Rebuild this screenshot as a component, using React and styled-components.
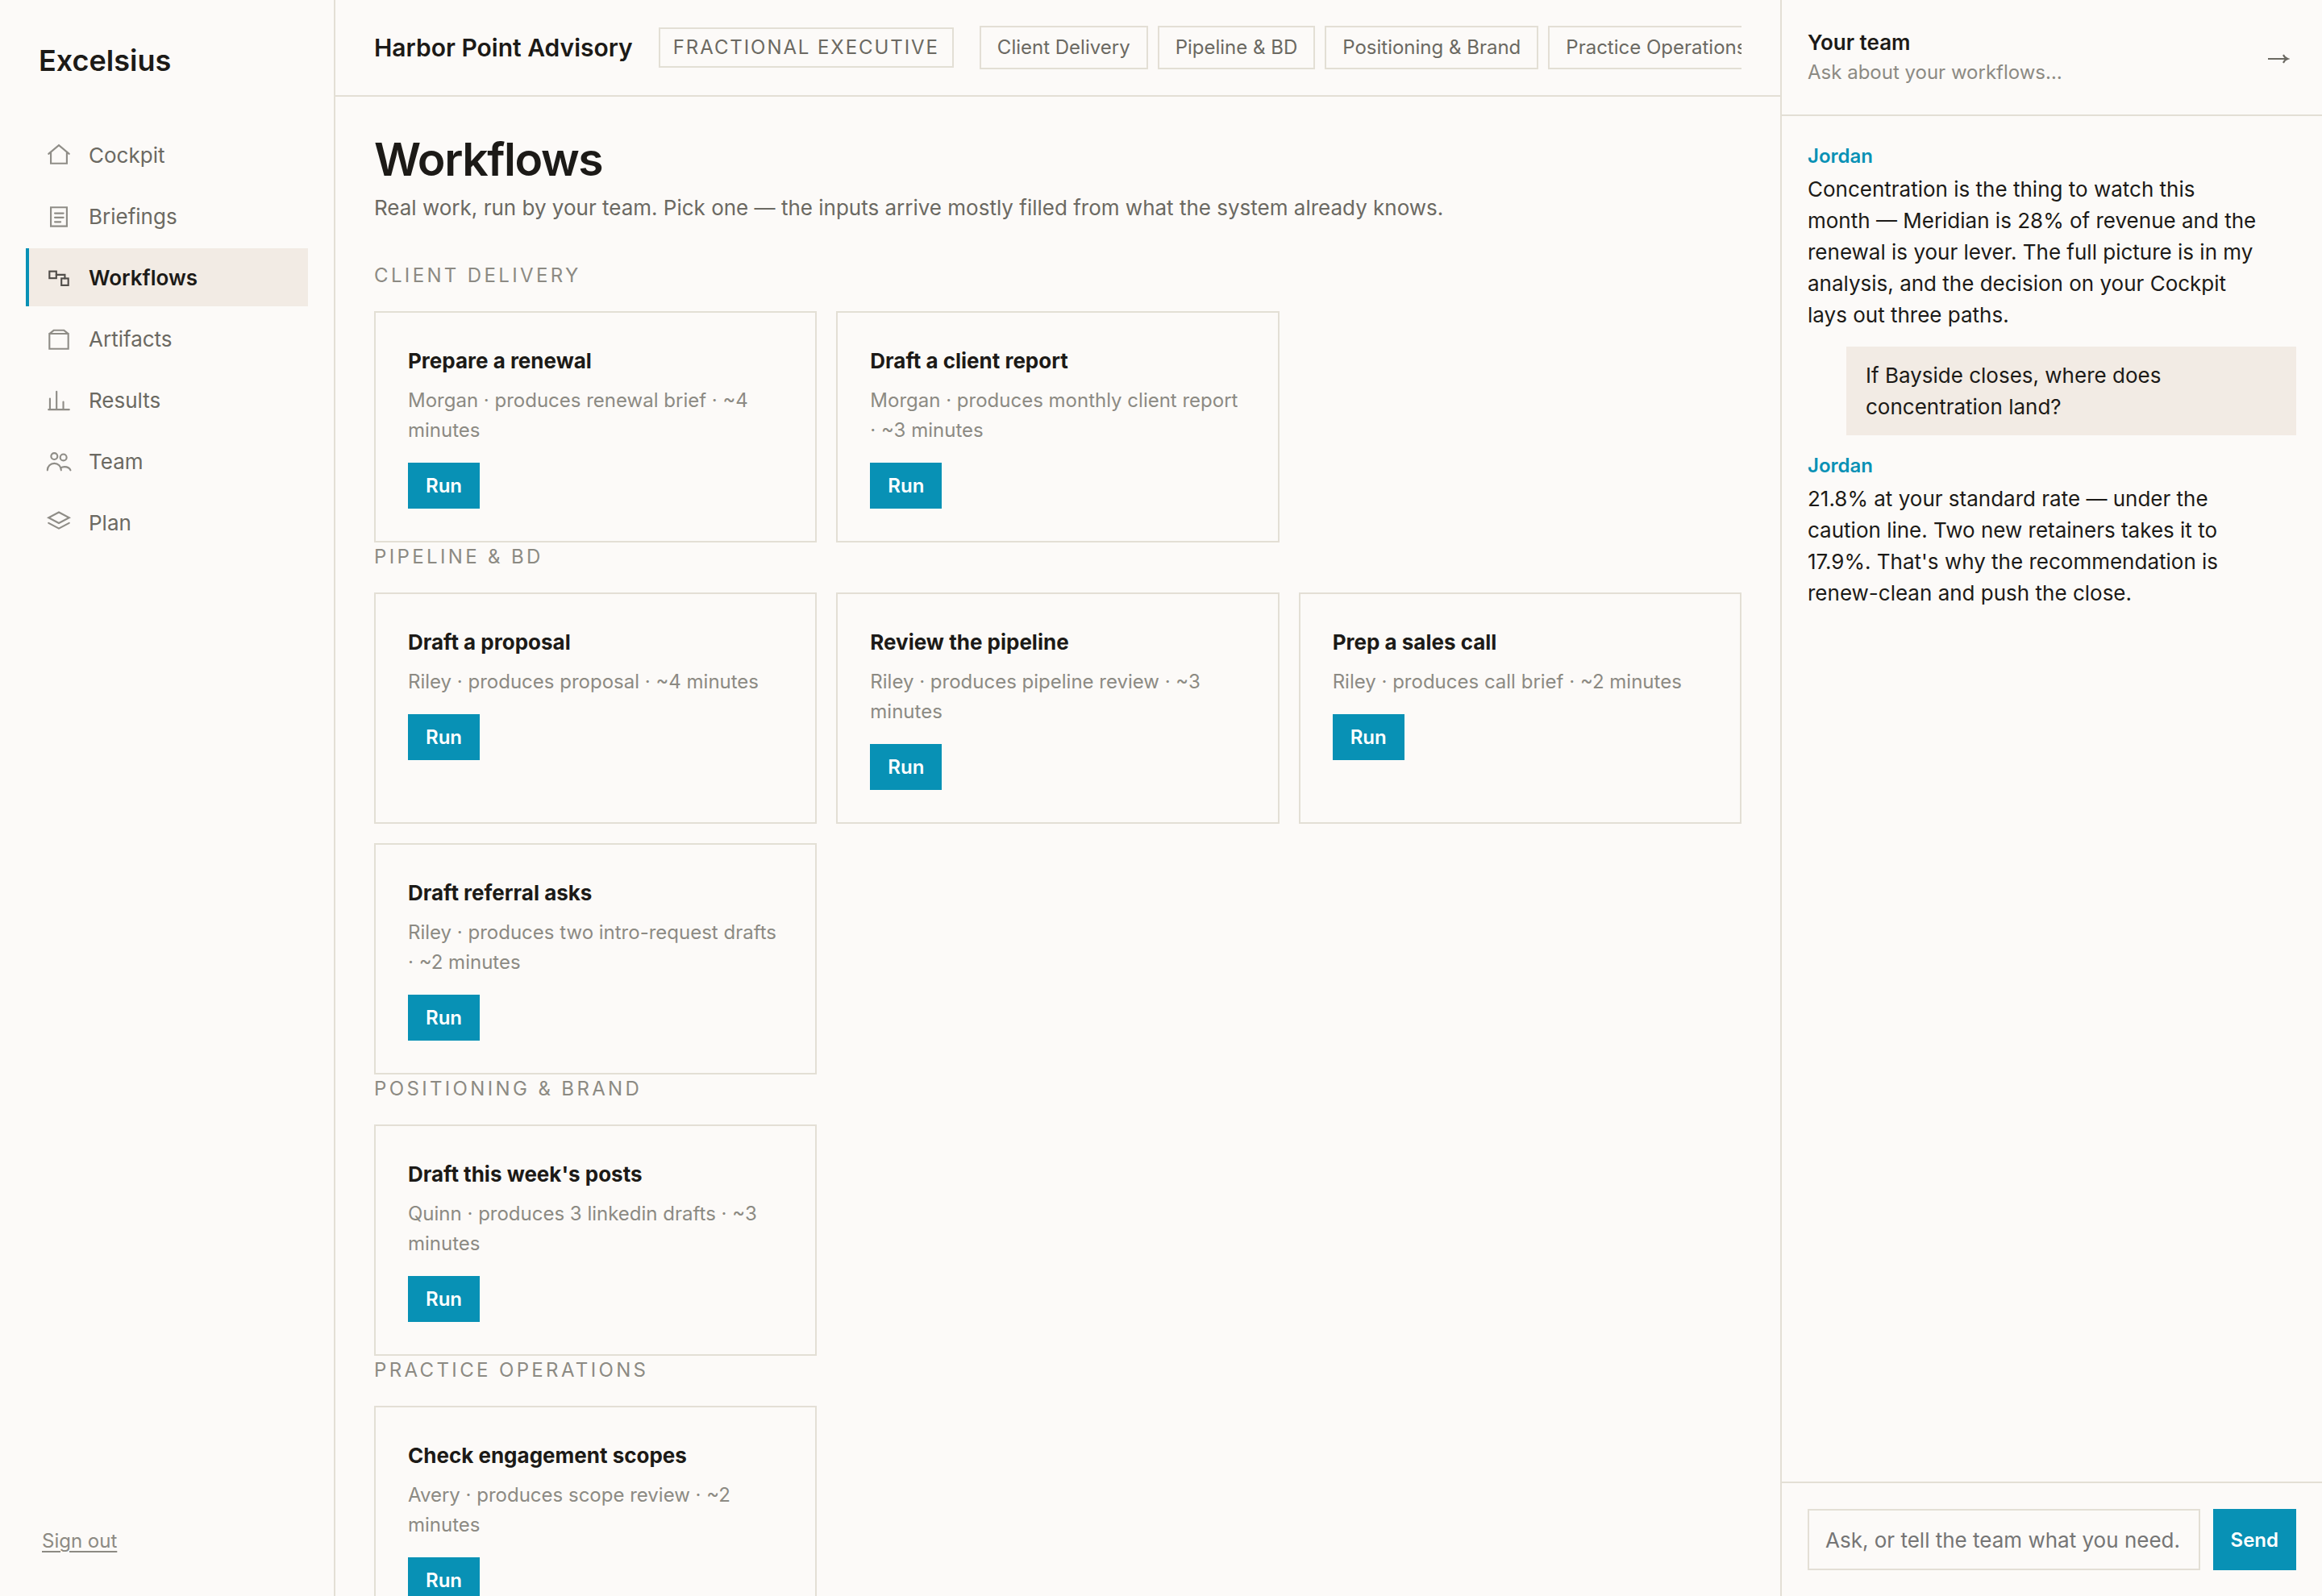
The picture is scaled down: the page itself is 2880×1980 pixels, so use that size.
import { useState } from "react";
import styled, { createGlobalStyle } from "styled-components";

const ink = "#1c1a17";
const body = "#6b6962";
const muted = "#8c8a83";
const line = "#e3dfd5";
const paper = "#fcfaf8";
const sand = "#f2ebe4";
const teal = "#0891b5";

const GlobalStyle = createGlobalStyle`
  * {
    box-sizing: border-box;
  }

  body {
    margin: 0;
    background: ${paper};
    color: ${ink};
    font-family: Inter, "Liberation Sans", sans-serif;
    font-size: 26px;
    line-height: 39px;
  }

  button,
  input {
    font-family: inherit;
  }

  h1,
  h2,
  h3,
  p {
    margin: 0;
  }
`;

const Shell = styled.div`
  display: grid;
  grid-template-columns: 416px minmax(0, 1fr) 672px;
  height: 100vh;
  overflow: hidden;
`;

/* sidebar */

const Sidebar = styled.aside`
  display: flex;
  flex-direction: column;
  padding: 48px 32px;
  border-right: 2px solid ${line};
`;

const Brand = styled.div`
  padding: 0 16px;
  font-size: 36px;
  line-height: 54px;
  font-weight: 600;
`;

const Nav = styled.nav`
  display: flex;
  flex-direction: column;
  gap: 4px;
  margin-top: 54px;
`;

const NavLink = styled.a`
  display: flex;
  align-items: center;
  gap: 20px;
  height: 72px;
  padding: 0 20px;
  border-left: 4px solid ${(props) => (props.$active ? teal : "transparent")};
  background: ${(props) => (props.$active ? sand : "transparent")};
  color: ${(props) => (props.$active ? ink : body)};
  font-weight: ${(props) => (props.$active ? 600 : 400)};
  text-decoration: none;
`;

const NavIcon = styled.svg`
  flex: none;
  width: 34px;
  height: 34px;
  fill: none;
  stroke: currentColor;
  stroke-width: 1.5;
  stroke-linecap: round;
  opacity: 0.75;
`;

const SignOut = styled.a`
  align-self: flex-start;
  margin-top: auto;
  padding: 0 20px;
  color: ${muted};
  font-size: 24px;
  line-height: 40px;
  text-underline-offset: 4px;
`;

/* main column */

const Main = styled.main`
  display: flex;
  flex-direction: column;
  min-width: 0;
  overflow: hidden;
`;

const TopBar = styled.header`
  flex: none;
  display: flex;
  align-items: center;
  gap: 32px;
  padding: 32px 48px;
  border-bottom: 2px solid ${line};
`;

const Company = styled.div`
  font-size: 30px;
  font-weight: 600;
  white-space: nowrap;
`;

const Tag = styled.div`
  padding: 4px 16px;
  border: 2px solid ${line};
  color: ${body};
  font-size: 24px;
  line-height: 38px;
  letter-spacing: 0.08em;
  text-transform: uppercase;
  white-space: nowrap;
`;

const Chips = styled.div`
  flex: 1;
  display: flex;
  gap: 12px;
  overflow: hidden;
`;

const Chip = styled.button`
  flex: none;
  padding: 6px 20px;
  border: 2px solid ${line};
  background: transparent;
  color: ${body};
  font-size: 24px;
  line-height: 38px;
`;

const Content = styled.div`
  flex: 1;
  min-height: 0;
  padding: 40px 48px;
  overflow: hidden;
`;

const PageTitle = styled.h1`
  font-size: 57px;
  line-height: 76px;
  font-weight: 600;
  letter-spacing: -0.025em;
`;

const Lead = styled.p`
  margin-top: 2px;
  margin-bottom: 47px;
  color: ${body};
`;

const SectionLabel = styled.h2`
  margin-bottom: 26px;
  color: ${muted};
  font-size: 24px;
  line-height: 36px;
  font-weight: 400;
  letter-spacing: 0.14em;
  text-transform: uppercase;
`;

const CardGrid = styled.div`
  display: grid;
  grid-template-columns: repeat(3, minmax(0, 1fr));
  gap: 24px;
`;

const Card = styled.article`
  display: flex;
  flex-direction: column;
  align-items: flex-start;
  padding: 40px;
  border: 2px solid ${line};
`;

const CardTitle = styled.h3`
  font-size: 26px;
  line-height: 40px;
  font-weight: 700;
`;

const CardMeta = styled.p`
  margin: 10px 0 22px;
  color: ${muted};
  font-size: 24px;
  line-height: 37px;
`;

const RunButton = styled.button`
  padding: 10px 22px;
  border: 0;
  background: ${teal};
  color: #fff;
  font-size: 24px;
  line-height: 37px;
  font-weight: 600;
`;

/* team panel */

const Panel = styled.aside`
  display: flex;
  flex-direction: column;
  min-height: 0;
  border-left: 2px solid ${line};
`;

const PanelHead = styled.header`
  display: flex;
  align-items: center;
  justify-content: space-between;
  padding: 32px;
  border-bottom: 2px solid ${line};
`;

const PanelTitle = styled.h2`
  font-size: 26px;
  line-height: 38px;
  font-weight: 600;
`;

const PanelHint = styled.p`
  color: ${muted};
  font-size: 24px;
  line-height: 36px;
`;

const CollapseButton = styled.button`
  display: flex;
  align-items: center;
  height: 78px;
  padding: 0 8px;
  border: 0;
  background: transparent;
  color: ${body};
`;

const ArrowIcon = styled.svg`
  width: 28px;
  height: 28px;
  fill: none;
  stroke: currentColor;
  stroke-width: 2;
`;

const Thread = styled.div`
  flex: 1;
  display: flex;
  flex-direction: column;
  gap: 20px;
  min-height: 0;
  padding: 32px;
`;

const Reply = styled.div`
  max-width: 92%;
`;

const Sender = styled.div`
  margin-bottom: 3px;
  color: ${teal};
  font-size: 24px;
  line-height: 36px;
  font-weight: 600;
`;

const Question = styled.p`
  margin-left: 48px;
  padding: 16px 24px;
  background: ${sand};
`;

const Composer = styled.form`
  display: flex;
  gap: 16px;
  padding: 32px;
  border-top: 2px solid ${line};
`;

const AskInput = styled.input`
  flex: 1;
  min-width: 0;
  height: 76px;
  padding: 0 20px;
  border: 2px solid ${line};
  border-radius: 0;
  background: transparent;
  color: ${ink};
  font-size: 26px;

  &::placeholder {
    color: #757575;
  }
`;

const SendButton = styled.button`
  padding: 0 22px;
  border: 0;
  background: ${teal};
  color: #fff;
  font-size: 24px;
  font-weight: 600;
`;

const navItems = [
  {
    label: "Cockpit",
    icon: <path d="M3 11.2L12 3.6l9 7.6M5 10v9.6h14V10" />,
  },
  {
    label: "Briefings",
    icon: <path d="M5 4.4h14v16.5H5zM8.5 9.6h7.5M8.5 13.3h7.5M8.5 17.2h5" />,
  },
  {
    label: "Workflows",
    icon: (
      <>
        <rect x="3.75" y="6.8" width="6" height="6" />
        <rect x="14.25" y="13" width="6" height="6" />
        <path d="M9.75 9.8h7.5V13" />
      </>
    ),
  },
  {
    label: "Artifacts",
    icon: <path d="M3.75 7.8h16.5V21H3.75zM3.75 7.8L7.5 4.8h9l3.75 3" />,
  },
  {
    label: "Results",
    icon: <path d="M3 20.6h18M4.2 20.6V11M10 20.6V4.8M15.9 20.6v-6.8" />,
  },
  {
    label: "Team",
    icon: (
      <>
        <circle cx="8" cy="7.8" r="2.8" />
        <circle cx="16" cy="8.8" r="2.8" />
        <path d="M2 20c0-3.5 2.7-6 6-6s6 2.5 6 6M13.5 18.2c1-.8 2.2-1.2 3.5-1.2 2.5 0 4.5 1.2 5.2 3" />
      </>
    ),
  },
  {
    label: "Plan",
    icon: <path d="M12 3.2l9 4.7-9 4.8-9-4.8zM3 12.6l9 4.8 9-4.8" />,
  },
];

const sections = [
  {
    name: "Client Delivery",
    workflows: [
      ["Prepare a renewal", "Morgan · produces renewal brief · ~4 minutes"],
      ["Draft a client report", "Morgan · produces monthly client report · ~3 minutes"],
    ],
  },
  {
    name: "Pipeline & BD",
    workflows: [
      ["Draft a proposal", "Riley · produces proposal · ~4 minutes"],
      ["Review the pipeline", "Riley · produces pipeline review · ~3 minutes"],
      ["Prep a sales call", "Riley · produces call brief · ~2 minutes"],
      ["Draft referral asks", "Riley · produces two intro-request drafts · ~2 minutes"],
    ],
  },
  {
    name: "Positioning & Brand",
    workflows: [["Draft this week's posts", "Quinn · produces 3 linkedin drafts · ~3 minutes"]],
  },
  {
    name: "Practice Operations",
    workflows: [["Check engagement scopes", "Avery · produces scope review · ~2 minutes"]],
  },
];

export default function App() {
  const [question, setQuestion] = useState("");

  return (
    <>
      <GlobalStyle />
      <Shell>
        <Sidebar>
          <Brand>Excelsius</Brand>
          <Nav>
            {navItems.map(({ label, icon }) => (
              <NavLink key={label} href="#" $active={label === "Workflows"}>
                <NavIcon viewBox="0 0 24 24" aria-hidden="true">
                  {icon}
                </NavIcon>
                {label}
              </NavLink>
            ))}
          </Nav>
          <SignOut href="#">Sign out</SignOut>
        </Sidebar>

        <Main>
          <TopBar>
            <Company>Harbor Point Advisory</Company>
            <Tag>Fractional Executive</Tag>
            <Chips>
              {sections.map(({ name }) => (
                <Chip key={name} type="button">
                  {name}
                </Chip>
              ))}
            </Chips>
          </TopBar>
          <Content>
            <PageTitle>Workflows</PageTitle>
            <Lead>
              Real work, run by your team. Pick one — the inputs arrive mostly filled from what the
              system already knows.
            </Lead>
            {sections.map(({ name, workflows }) => (
              <section key={name}>
                <SectionLabel>{name}</SectionLabel>
                <CardGrid>
                  {workflows.map(([title, meta]) => (
                    <Card key={title}>
                      <CardTitle>{title}</CardTitle>
                      <CardMeta>{meta}</CardMeta>
                      <RunButton type="button">Run</RunButton>
                    </Card>
                  ))}
                </CardGrid>
              </section>
            ))}
          </Content>
        </Main>

        <Panel>
          <PanelHead>
            <div>
              <PanelTitle>Your team</PanelTitle>
              <PanelHint>Ask about your workflows…</PanelHint>
            </div>
            <CollapseButton type="button" aria-label="Collapse team panel">
              <ArrowIcon viewBox="0 0 28 28" aria-hidden="true">
                <path d="M1 16h25M20 11c1 2.4 2.6 4.2 5.5 5-2.9.8-4.5 2.6-5.5 5" />
              </ArrowIcon>
            </CollapseButton>
          </PanelHead>
          <Thread>
            <Reply>
              <Sender>Jordan</Sender>
              <p>
                Concentration is the thing to watch this month — Meridian is 28% of revenue and the
                renewal is your lever. The full picture is in my analysis, and the decision on your
                Cockpit lays out three paths.
              </p>
            </Reply>
            <Question>If Bayside closes, where does concentration land?</Question>
            <Reply>
              <Sender>Jordan</Sender>
              <p>
                21.8% at your standard rate — under the caution line. Two new retainers takes it to
                17.9%. That's why the recommendation is renew-clean and push the close.
              </p>
            </Reply>
          </Thread>
          <Composer onSubmit={(e) => e.preventDefault()}>
            <AskInput
              aria-label="Message your team"
              placeholder="Ask, or tell the team what you need."
              value={question}
              onChange={(e) => setQuestion(e.target.value)}
            />
            <SendButton type="submit">Send</SendButton>
          </Composer>
        </Panel>
      </Shell>
    </>
  );
}
